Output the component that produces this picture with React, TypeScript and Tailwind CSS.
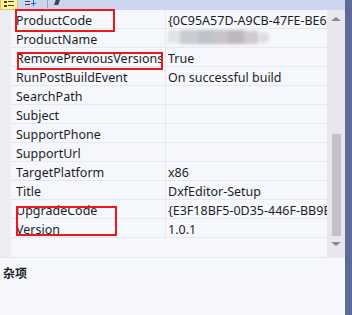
const rows: [string, string][] = [
  ['ProductCode', '{0C95A57D-A9CB-47FE-BE6'],
  ['ProductName', ''],
  ['RemovePreviousVersions', 'True'],
  ['RunPostBuildEvent', 'On successful build'],
  ['SearchPath', ''],
  ['Subject', ''],
  ['SupportPhone', ''],
  ['SupportUrl', ''],
  ['TargetPlatform', 'x86'],
  ['Title', 'DxfEditor-Setup'],
  ['UpgradeCode', '{E3F18BF5-0D35-446F-BB9E'],
  ['Version', '1.0.1'],
];

function Blurred() {
  // the product name is masked in the source picture
  return (
    <div className="-mt-[2px] flex h-[16px] items-center" style={{ filter: 'blur(1.5px)' }}>
      <div className="h-[12px] w-[12px] bg-[#e0e2e7]" />
      <div className="h-[14px] w-[18px] bg-[#c9cbd1]" />
      <div className="h-[14px] w-[16px] bg-[#bfc2c8]" />
      <div className="h-[14px] w-[14px] bg-[#c8c3c6]" />
      <div className="h-[14px] w-[16px] bg-[#bdb8bc]" />
      <div className="h-[13px] w-[14px] bg-[#cfcad0]" />
      <div className="h-[11px] w-[11px] rounded-full bg-[#dcdce2]" />
    </div>
  );
}

export default function App() {
  return (
    <div
      className="flex h-[315px] w-[352px] overflow-hidden bg-[#f5f7fd] text-[12.5px] text-[#1e1e1e]"
      style={{ fontFamily: '"Noto Sans", "Noto Sans CJK SC", sans-serif' }}
    >
      <div className="flex min-w-0 flex-1 flex-col">
        {/* toolbar, mostly scrolled off */}
        <div className="flex h-[10px] items-end bg-[#ccd5f0]">
          <div className="relative h-[10px] w-[18px] border border-t-0 border-[#e5c365] bg-[#fff29d]">
            <div className="absolute left-[3px] top-[1px] h-[2px] w-[3px] bg-[#424242]" />
            <div className="absolute left-[7px] top-[1px] h-[1px] w-[6px] bg-[#424242]" />
            <div className="absolute left-[3px] top-[5px] h-[2px] w-[3px] bg-[#424242]" />
            <div className="absolute left-[7px] top-[5px] h-[1px] w-[6px] bg-[#424242]" />
          </div>
          <div className="relative ml-[5px] h-[10px] w-[16px]">
            <div className="absolute left-[2px] top-[1px] h-[1px] w-[5px] bg-[#424242]" />
            <div className="absolute left-[2px] top-[4px] h-[1px] w-[5px] bg-[#424242]" />
            <div className="absolute left-[10px] top-0 h-[6px] w-[1px] bg-[#1e6fc7]" />
            <div className="absolute left-[8px] top-[3px] h-[1px] w-[5px] bg-[#1e6fc7]" />
          </div>
          <div className="ml-[8px] h-[8px] w-[1px] self-start bg-[#9aa2bd]" />
          <div className="ml-[6px] h-[5px] w-[6px] self-start bg-[#424242] [clip-path:polygon(0_100%,30%_0,100%_0,70%_100%)]" />
        </div>

        <div className="flex h-[247px]">
          <div className="relative flex min-w-0 flex-1 flex-col">
            {rows.map(([name, value]) => (
              <div key={name} className="flex h-[19px] leading-[17px]">
                <div className="w-[11px] shrink-0 bg-[#ececf1]" />
                <div className="w-[155px] shrink-0 border-b border-r border-[#e6e8ef] pl-[5px] pt-[2px] whitespace-nowrap">
                  {name}
                </div>
                <div className="min-w-0 flex-1 overflow-hidden border-b border-[#e6e8ef] pl-[2px] pt-[2px] whitespace-nowrap">
                  {name === 'ProductName' ? <Blurred /> : value}
                </div>
              </div>
            ))}
            <div className="flex flex-1">
              <div className="w-[11px] bg-[#ececf1]" />
            </div>

            {/* highlight boxes */}
            <div className="absolute left-[15px] top-[-1px] h-[23px] w-[100px] border-2 border-[#e8191c]" />
            <div className="absolute left-[17px] top-[42px] h-[18px] w-[146px] border-2 border-[#e8191c]" />
            <div className="absolute left-[16px] top-[196px] h-[30px] w-[101px] border-2 border-[#e8191c]" />
          </div>

          {/* scrollbar */}
          <div className="flex w-[18px] flex-col items-center bg-[#e8e8ec]">
            <div className="mt-[7px] h-0 w-0 border-x-[5px] border-b-[4px] border-x-transparent border-b-[#868999]" />
            <div className="mt-[113px] h-[102px] w-[9px] bg-[#c2c3c9]" />
            <div className="mt-[6px] h-0 w-0 border-x-[5px] border-t-[4px] border-x-transparent border-t-[#868999]" />
          </div>
        </div>

        <div className="border-t border-[#e6e8ef] pl-[3px] pt-[7px] text-[12px] font-bold">杂项</div>
      </div>
      <div className="w-[7px] bg-[#5d6b99]" />
    </div>
  );
}
